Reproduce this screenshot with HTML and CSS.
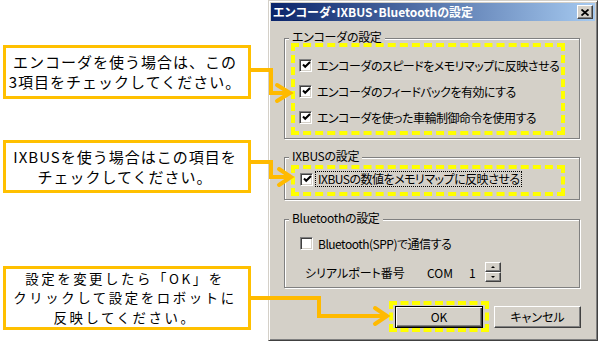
FILE: index.html
```html
<!DOCTYPE html>
<html lang="ja">
<head>
  <meta charset="UTF-8" />
  <title>エンコーダ・IXBUS・Bluetoothの設定</title>
  <link rel="stylesheet" href="styles.css">
</head>
<body>

<div class="page">
  <div class="notes">
    <div class="note note-enc">エンコーダを使う場合は、この<br>3項目をチェックしてください。</div>
    <div class="note note-ixbus">IXBUSを使う場合はこの項目を<br>チェックしてください。</div>
    <div class="note note-ok">設定を変更したら「OK」を<br>クリックして設定をロボットに<br>反映してください。</div>
  </div>

  <div class="dialog">
    <div class="titlebar">
      <span class="title">エンコーダ・IXBUS・Bluetoothの設定</span>
      <span class="close">
        <svg width="8" height="7" viewBox="0 0 8 7"><path d="M0.5 0.5L7.5 6.5M7.5 0.5L0.5 6.5" stroke="#000" stroke-width="1.8" fill="none"/></svg>
      </span>
    </div>

    <div class="group group-enc">
      <span class="group-title">エンコーダの設定</span>
      <div class="mark mark-enc">
        <div class="row"><span class="check"><svg width="9" height="9" viewBox="0 0 9 9"><polyline points="1,3.5 3.2,5.8 8,1" stroke="#000" stroke-width="2" fill="none"/></svg></span>エンコーダのスピードをメモリマップに反映させる</div>
        <div class="row"><span class="check"><svg width="9" height="9" viewBox="0 0 9 9"><polyline points="1,3.5 3.2,5.8 8,1" stroke="#000" stroke-width="2" fill="none"/></svg></span>エンコーダのフィードバックを有効にする</div>
        <div class="row"><span class="check"><svg width="9" height="9" viewBox="0 0 9 9"><polyline points="1,3.5 3.2,5.8 8,1" stroke="#000" stroke-width="2" fill="none"/></svg></span>エンコーダを使った車輪制御命令を使用する</div>
      </div>
    </div>

    <div class="group group-ixbus">
      <span class="group-title">IXBUSの設定</span>
      <div class="mark mark-ixbus">
        <div class="row row-ixbus"><span class="check"><svg width="9" height="9" viewBox="0 0 9 9"><polyline points="1,3.5 3.2,5.8 8,1" stroke="#000" stroke-width="2" fill="none"/></svg></span><span class="focus">IXBUSの数値をメモリマップに反映させる</span></div>
      </div>
    </div>

    <div class="group group-bt">
      <span class="group-title">Bluetoothの設定</span>
      <div class="row row-bt"><span class="check"></span>Bluetooth(SPP)で通信する</div>
      <div class="row row-port">
        <span class="port-label">シリアルポート番号</span>
        <span class="port-com">COM</span>
        <span class="port-num">1</span>
        <span class="spin">
          <span class="spin-btn up"></span>
          <span class="spin-btn down"></span>
        </span>
      </div>
    </div>

    <div class="buttons">
      <div class="mark mark-ok"><span class="btn btn-ok">OK</span></div>
      <span class="btn btn-cancel">キャンセル</span>
    </div>
  </div>

  <svg class="arrows" width="598" height="342" viewBox="0 0 598 342">
    <g stroke="#ffba00" stroke-width="4" fill="none">
      <path d="M250 70H271V93H288"/>
      <path d="M277 85L290 93L277 101" stroke-linecap="round"/>
      <path d="M250 162H271V177H289"/>
      <path d="M279 169L291 177L279 185" stroke-linecap="round"/>
      <path d="M250 298H319V316H385"/>
      <path d="M375 308L387 316L375 324" stroke-linecap="round"/>
    </g>
  </svg>
</div>

</body>
</html>
```

FILE: styles.css
```css
body {
  margin: 0;
  background: #fff;
  font-family: "Noto Sans CJK JP", "Liberation Sans", sans-serif;
  color: #000;
}
.page {
  position: relative;
  display: flex;
  width: 598px;
  height: 342px;
  overflow: hidden;
}

/* callouts on the left */
.notes {
  width: 268px;
  flex-shrink: 0;
  padding-left: 3px;
  box-sizing: border-box;
}
.note {
  width: 248px;
  box-sizing: border-box;
  border: 3px solid #ffc000;
  display: flex;
  align-items: center;
  justify-content: center;
  text-align: center;
  padding-right: 4px;
  font-size: 15px;
  line-height: 20px;
  letter-spacing: 1px;
}
.note-enc {
  margin-top: 45px;
  height: 54px;
}
.note-ixbus {
  margin-top: 41px;
  height: 53px;
}
.note-ok {
  margin-top: 73px;
  height: 64px;
  font-size: 13.4px;
  line-height: 19.4px;
  letter-spacing: 2.6px;
}
.arrows {
  position: absolute;
  left: 0;
  top: 0;
  pointer-events: none;
}

/* dialog window */
.dialog {
  width: 330px;
  height: 341px;
  flex-shrink: 0;
  box-sizing: border-box;
  background: #d4d0c8;
  border: 1px solid;
  border-color: #d4d0c8 #404040 #404040 #d4d0c8;
  box-shadow: inset 1px 1px #fff, inset -1px -1px #808080;
  padding: 2px;
  font-size: 12px;
  font-feature-settings: "palt";
}
.titlebar {
  height: 18px;
  display: flex;
  align-items: center;
  justify-content: space-between;
  padding: 0 2px;
  background: linear-gradient(to right, #0a246a, #a6caf0);
}
.title {
  color: #fff;
  font-weight: bold;
  line-height: 18px;
  white-space: nowrap;
}
.close {
  width: 16px;
  height: 14px;
  box-sizing: border-box;
  background: #d4d0c8;
  border: 1px solid;
  border-color: #fff #404040 #404040 #fff;
  box-shadow: inset -1px -1px #808080;
  display: flex;
  align-items: center;
  justify-content: center;
}
.close svg {
  display: block;
}

/* group boxes */
.group {
  margin-left: 13px;
  width: 296px;
  box-sizing: border-box;
  border: 1px solid #808080;
  box-shadow: inset 1px 1px #fff, 1px 1px #fff;
}
.group-enc {
  margin-top: 17px;
  padding-bottom: 3px;
}
.group-ixbus {
  margin-top: 18px;
  padding-bottom: 3px;
}
.group-bt {
  margin-top: 19px;
  padding-bottom: 5px;
}
.group-title {
  display: block;
  width: fit-content;
  margin: -8px 0 0 4px;
  padding: 0 3px;
  background: #d4d0c8;
  line-height: 12px;
  letter-spacing: -0.3px;
  white-space: nowrap;
}

/* yellow highlight */
.mark {
  border: 4px dashed #ffff00;
  box-sizing: border-box;
}
.group .mark {
  margin-left: 6px;
  width: 274px;
}
.mark-enc {
  padding: 5px 0 1px 4px;
}
.mark-ixbus {
  margin-top: 3px;
  padding: 0 0 3px 5px;
}

.row {
  display: flex;
  align-items: center;
  height: 26px;
  gap: 5px;
  white-space: nowrap;
  letter-spacing: -0.5px;
}
.row-ixbus {
  height: 20px;
  gap: 2px;
}
.focus {
  border: 1px dotted #000;
  padding: 0 1px 0 2px;
  line-height: 14px;
}
.row-bt {
  margin-top: 8px;
  height: 22px;
  padding-left: 15px;
}
.row-port {
  margin-top: 8px;
  height: 20px;
  padding-left: 20px;
  gap: 0;
  letter-spacing: 0;
}
.check {
  width: 13px;
  height: 13px;
  flex-shrink: 0;
  box-sizing: border-box;
  background: #fff;
  border: 1px solid;
  border-color: #808080 #fff #fff #808080;
  box-shadow: inset 1px 1px #404040, inset -1px -1px #d4d0c8;
  display: flex;
  align-items: center;
  justify-content: center;
}
.check svg {
  display: block;
  margin: 1px 0 0 1px;
}
.port-label {
  width: 122px;
}
.port-com {
  width: 42px;
}
.port-num {
  width: 16px;
}
.spin {
  display: flex;
  flex-direction: column;
}
.spin-btn {
  width: 16px;
  height: 10px;
  box-sizing: border-box;
  border: 1px solid;
  border-color: #fff #404040 #404040 #fff;
  box-shadow: inset -1px -1px #808080;
  display: flex;
  align-items: center;
  justify-content: center;
}
.spin-btn::before {
  content: "";
  border: 2px solid transparent;
}
.up::before {
  border-top: 0;
  border-bottom-color: #000;
}
.down::before {
  border-bottom: 0;
  border-top-color: #000;
}

/* buttons */
.buttons {
  display: flex;
  justify-content: flex-end;
  align-items: center;
  margin-top: 13px;
  padding-right: 14px;
}
.mark-ok {
  height: 31px;
  padding: 0 2px;
  display: flex;
  align-items: center;
}
.btn {
  height: 22px;
  box-sizing: border-box;
  display: flex;
  align-items: center;
  justify-content: center;
  background: #d4d0c8;
}
.btn-ok {
  width: 88px;
  border: 1px solid #000;
  box-shadow: inset 1px 1px #fff, inset -1px -1px #404040, inset -2px -2px #808080;
}
.btn-cancel {
  width: 87px;
  margin-left: 5px;
  border: 1px solid;
  border-color: #fff #404040 #404040 #fff;
  box-shadow: inset -1px -1px #808080;
}
```
